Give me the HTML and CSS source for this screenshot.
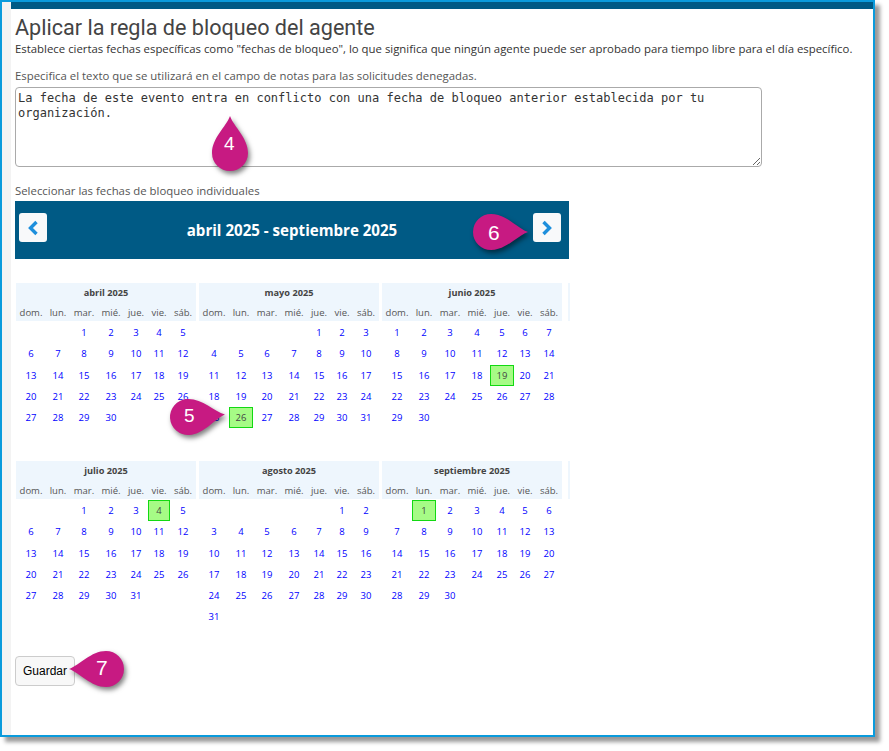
FILE: index.html
```html
<!DOCTYPE html>
<html lang="es">
<head>
<meta charset="utf-8">
<title>Aplicar la regla de bloqueo del agente</title>
<link rel="stylesheet" href="styles.css">
</head>
<body>
<div class="frame">
  <div class="rail"></div>
  <main class="main">
    <h1 class="title">Aplicar la regla de bloqueo del agente</h1>
    <p class="intro">Establece ciertas fechas específicas como "fechas de bloqueo", lo que significa que ningún agente puede ser aprobado para tiempo libre para el día específico.</p>
    <label class="label notes-label" for="notes">Especifica el texto que se utilizará en el campo de notas para las solicitudes denegadas.</label>
    <textarea class="notes" id="notes">La fecha de este evento entra en conflicto con una fecha de bloqueo anterior establecida por tu organización.</textarea>
    <div class="label dates-label">Seleccionar las fechas de bloqueo individuales</div>
    <div class="nav">
      <button class="nav-btn" type="button"><svg width="12" height="16" viewBox="0 0 12 16"><path d="M9.5 2 L3.5 8 L9.5 14" fill="none" stroke="#1e8fdc" stroke-width="3.4"/></svg></button>
      <div class="nav-title">abril 2025 - septiembre 2025</div>
      <button class="nav-btn" type="button"><svg width="12" height="16" viewBox="0 0 12 16"><path d="M2.5 2 L8.5 8 L2.5 14" fill="none" stroke="#1e8fdc" stroke-width="3.4"/></svg></button>
    </div>
    <div class="months" id="months"></div>
    <button class="save" type="button">Guardar</button>
  </main>

  <div class="callout c4"><svg width="60" height="80" viewBox="-30 -40 60 80"><path class="drop" transform="translate(0 18) rotate(-90)" d="M37 0C26 -4 15 -18 0 -18A18 18 0 1 0 0 18C15 18 26 4 37 0Z"/></svg><span>4</span></div>
  <div class="callout c5"><svg width="80" height="60" viewBox="-40 -30 80 60"><path class="drop" transform="translate(-18 0) rotate(-4)" d="M37 0C26 -4 15 -18 0 -18A18 18 0 1 0 0 18C15 18 26 4 37 0Z"/></svg><span>5</span></div>
  <div class="callout c6"><svg width="80" height="60" viewBox="-40 -30 80 60"><path class="drop" transform="translate(-18 0)" d="M37 0C26 -4 15 -18 0 -18A18 18 0 1 0 0 18C15 18 26 4 37 0Z"/></svg><span>6</span></div>
  <div class="callout c7"><svg width="80" height="60" viewBox="-40 -30 80 60"><path class="drop" transform="translate(18 0) rotate(180)" d="M37 0C26 -4 15 -18 0 -18A18 18 0 1 0 0 18C15 18 26 4 37 0Z"/></svg><span>7</span></div>
</div>
<script src="calendar.js"></script>
</body>
</html>
```
FILE: styles.css
```css
* { box-sizing: border-box; }
html, body { margin: 0; padding: 0; background: #fff; }
body { width: 889px; height: 751px; overflow: hidden; font-family: "Open Sans", sans-serif; color: #444; }

.frame {
  position: relative;
  width: 875px;
  height: 737px;
  display: flex;
  border: 2px solid #0a9bdc;
  box-shadow: 5px 5px 4px #9a9a9a;
  background: #fff;
}
.rail { width: 9px; flex: none; background: #f3f3f3; }
.main { flex: 1; min-width: 0; border-top: 7px solid #005a85; padding: 5px 0 0 4px; }

.title { margin: 0; font: 400 21.6px/27px Roboto, sans-serif; color: #444; }
.intro { margin: 0; font-size: 11.38px; line-height: 16px; color: #333; white-space: nowrap; }
.label { font-size: 11.38px; line-height: 16px; color: #555; white-space: nowrap; }
.notes-label { display: block; margin-top: 11px; }
.notes {
  display: block;
  width: 747px;
  height: 80px;
  margin-top: 3px;
  padding: 3px 2px 2px;
  border: 1px solid #aaa;
  border-radius: 4px;
  font: 12px/15px "DejaVu Sans Mono", monospace;
  color: #333;
  background: #fff;
  outline: none;
}
.dates-label { margin-top: 16px; }
.nav {
  width: 554px;
  height: 58px;
  margin-top: 2px;
  padding: 12px 8px 0 4px;
  display: flex;
  align-items: flex-start;
  justify-content: space-between;
  background: #005a85;
}
.nav-btn {
  width: 28px;
  height: 29px;
  padding: 0;
  display: flex;
  align-items: center;
  justify-content: center;
  border: 0;
  border-radius: 3px;
  background: #f8f9fa;
}
.nav-title { margin-left: 4px; font-size: 15.1px; font-weight: 700; line-height: 35px; color: #fff; }

.months {
  margin: 24px 0 0 1px;
  display: grid;
  grid-template-columns: repeat(3, 180px) 8px;
  column-gap: 3px;
}
.month-edge { height: 38px; margin-left: 3px; width: 2px; background: #eef6fd; }
.month { height: 178px; }
.month-head { height: 38px; background: #eef6fd; }
.month-name { height: 20px; font-size: 9.2px; font-weight: 700; line-height: 20px; text-align: center; color: #444; }
.days {
  display: grid;
  grid-template-columns: 30px 24px 28px 26px 24px 22px 26px;
  grid-auto-rows: 21.25px;
}
.weekdays { grid-auto-rows: 18px; }
.dow { font-size: 9.5px; line-height: 20px; text-align: center; color: #555; }
.days-body { margin-top: 1px; }
.day { font-size: 9.5px; line-height: 21px; text-align: center; color: #00f; }
.day.blocked { background: #a6fb86; border: 1px solid #12d912; color: #444; line-height: 19px; }

.save {
  display: block;
  width: 60px;
  height: 30px;
  margin-top: 17px;
  padding: 0;
  font: 12px "Liberation Sans", sans-serif;
  color: #000;
  background: #f8f8f8;
  border: 1px solid #ccc;
  border-radius: 4px;
}

.callout { position: absolute; display: flex; align-items: center; justify-content: center; }
.callout svg { display: block; overflow: visible; filter: drop-shadow(2px 3px 2.5px rgba(0,0,0,.5)); }
.drop { fill: #c71a82; }
.callout span { position: absolute; font: 21px/22px "Liberation Sans", sans-serif; color: #fff; }
.c4 { left: 198px; top: 93px; width: 60px; height: 80px; }
.c4 span { left: 24px; top: 38px; font-size: 19px; }
.c5 { left: 164px; top: 385px; width: 80px; height: 60px; }
.c5 span { left: 18px; top: 18px; font-size: 19px; }
.c6 { left: 467px; top: 200px; width: 80px; height: 60px; }
.c6 span { left: 19px; top: 20px; }
.c7 { left: 46px; top: 637px; width: 80px; height: 60px; }
.c7 span { left: 48px; top: 18px; }
```
FILE: calendar.js
```js
var months = [
  { name: "abril 2025", offset: 2, days: 30, blocked: 0 },
  { name: "mayo 2025", offset: 4, days: 31, blocked: 26 },
  { name: "junio 2025", offset: 0, days: 30, blocked: 19 },
  { name: "julio 2025", offset: 2, days: 31, blocked: 4 },
  { name: "agosto 2025", offset: 5, days: 31, blocked: 0 },
  { name: "septiembre 2025", offset: 1, days: 30, blocked: 1 }
];
var dow = ["dom.", "lun.", "mar.", "mié.", "jue.", "vie.", "sáb."];
var html = "";
months.forEach(function (m, i) {
  html += '<section class="month"><div class="month-head"><div class="month-name">' + m.name + '</div><div class="days weekdays">';
  dow.forEach(function (d) { html += '<div class="dow">' + d + '</div>'; });
  html += '</div></div><div class="days days-body">';
  for (var e = 0; e < m.offset; e++) html += '<div></div>';
  for (var d = 1; d <= m.days; d++) {
    html += '<div class="day' + (d === m.blocked ? ' blocked' : '') + '">' + d + '</div>';
  }
  html += '</div></section>';
  if (i === 2 || i === 5) html += '<div class="month-edge"></div>';
});
document.getElementById("months").innerHTML = html;
```
